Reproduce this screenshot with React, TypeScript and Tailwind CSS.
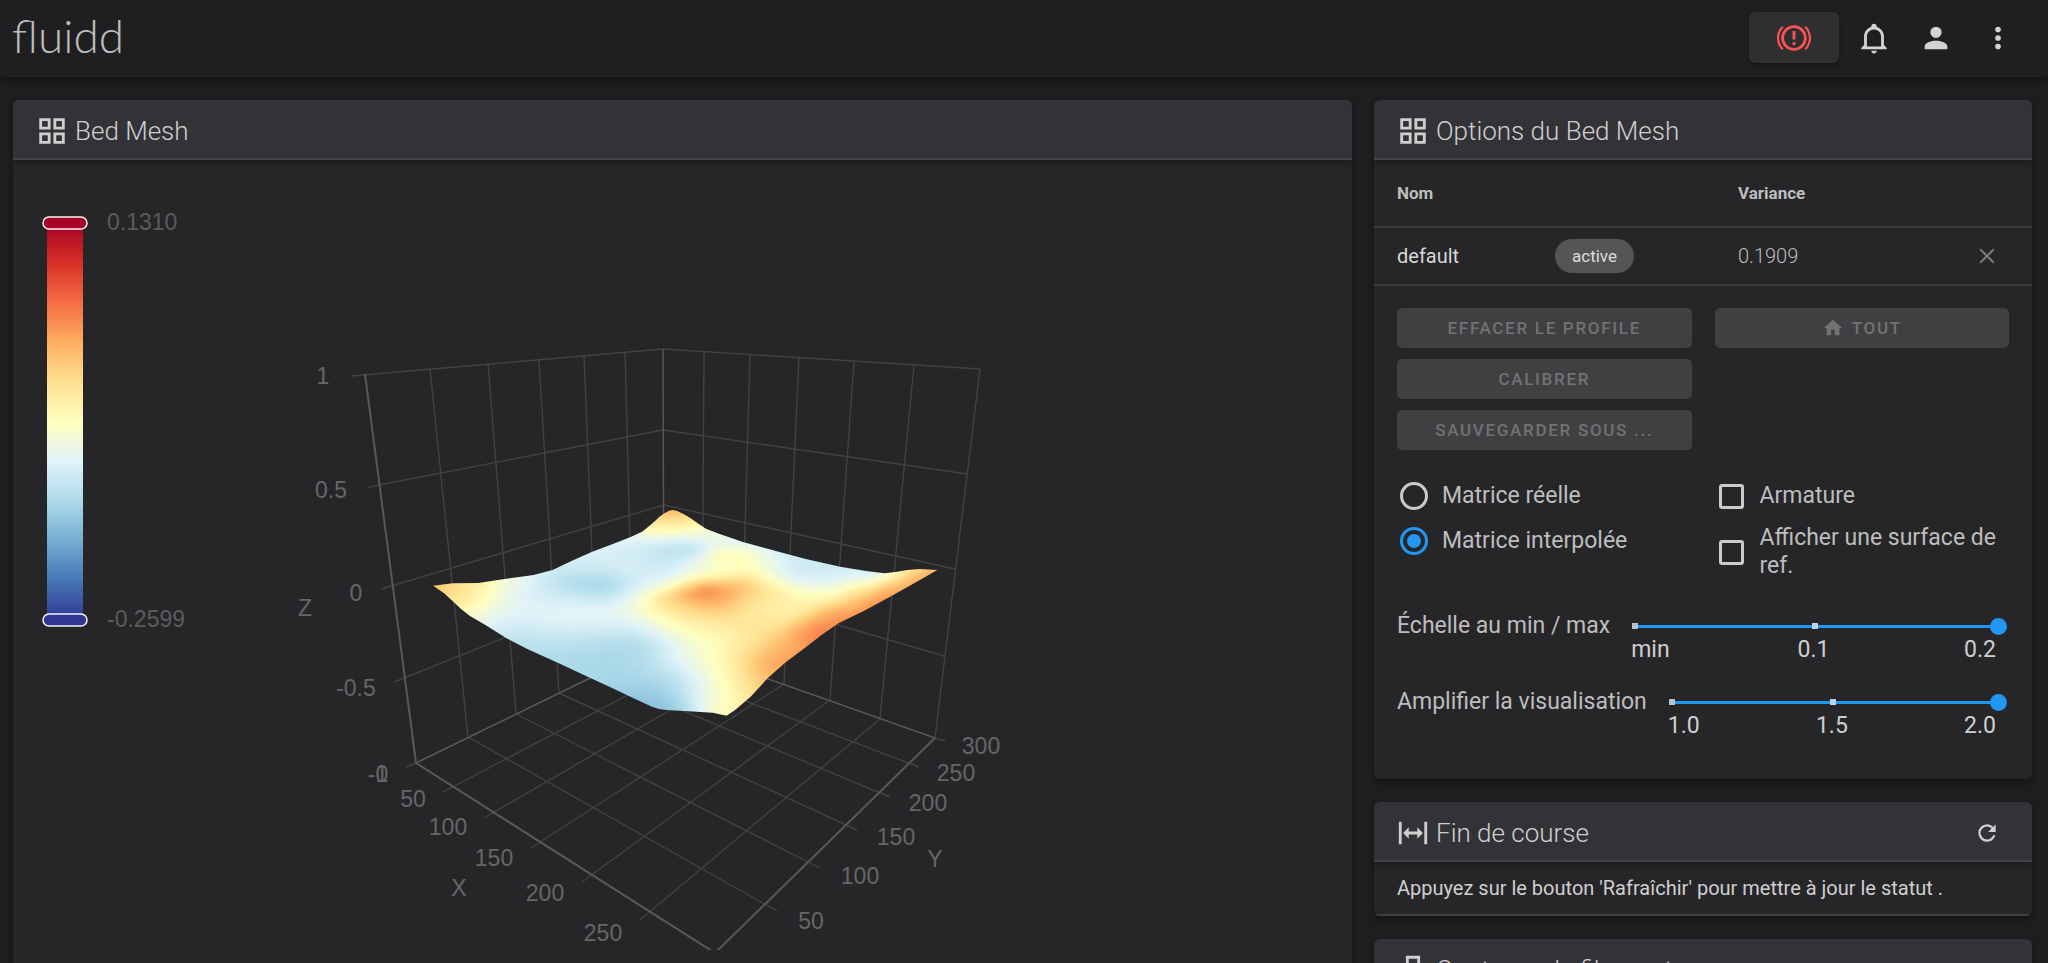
import { useState, type ReactNode } from 'react';

const PALETTE = [
  [49, 54, 149],
  [69, 117, 180],
  [116, 173, 209],
  [171, 217, 233],
  [224, 243, 248],
  [255, 255, 191],
  [254, 224, 144],
  [253, 174, 97],
  [244, 109, 67],
  [215, 48, 39],
  [165, 0, 38],
];

function paletteColor(value: number): string {
  const v = Math.min(0.9999, Math.max(0, value)) * (PALETTE.length - 1);
  const i = Math.floor(v);
  const f = v - i;
  const mix = PALETTE[i].map((c, k) => Math.round(c + (PALETTE[i + 1][k] - c) * f));
  return `rgb(${mix[0]},${mix[1]},${mix[2]})`;
}

/* Probe readings on the projected bed surface: x, y, normalised height. */
const SAMPLES: [number, number, number][] = [
  [38, 317, 0.67], [95, 313, 0.61], [100, 335, 0.6], [180, 310, 0.55], [130, 360, 0.56], [190, 350, 0.51],
  [150, 400, 0.48], [240, 300, 0.47], [230, 340, 0.46], [250, 390, 0.42], [175, 425, 0.43], [300, 292, 0.42],
  [310, 330, 0.4], [320, 400, 0.4], [220, 450, 0.38], [380, 275, 0.37], [400, 300, 0.34], [480, 310, 0.31],
  [520, 330, 0.31], [560, 310, 0.32], [500, 350, 0.35], [430, 340, 0.35], [620, 320, 0.38], [500, 225, 0.38],
  [500, 260, 0.37], [600, 270, 0.38], [420, 380, 0.4], [500, 400, 0.41], [350, 440, 0.38], [280, 450, 0.36],
  [270, 490, 0.33], [330, 490, 0.33], [330, 530, 0.32], [450, 540, 0.3], [560, 540, 0.3], [430, 480, 0.34],
  [560, 480, 0.33], [640, 490, 0.33], [700, 500, 0.37], [400, 550, 0.31], [500, 590, 0.3], [600, 570, 0.3],
  [600, 640, 0.27], [640, 665, 0.25], [680, 680, 0.25], [720, 690, 0.26], [700, 640, 0.28], [720, 600, 0.32],
  [760, 570, 0.38], [740, 540, 0.4], [700, 580, 0.33], [780, 690, 0.33], [780, 640, 0.36], [820, 620, 0.42],
  [820, 680, 0.42], [850, 640, 0.46], [860, 697, 0.48], [890, 707, 0.5], [900, 650, 0.51], [870, 600, 0.49],
  [820, 560, 0.46], [800, 520, 0.46], [740, 500, 0.41], [700, 450, 0.44], [640, 430, 0.42], [600, 400, 0.43],
  [650, 380, 0.49], [620, 350, 0.43], [700, 350, 0.57], [700, 400, 0.53], [760, 342, 0.67], [830, 328, 0.74],
  [840, 348, 0.73], [880, 350, 0.7], [920, 330, 0.67], [900, 285, 0.54], [770, 365, 0.65], [830, 375, 0.67],
  [924, 302, 0.62], [980, 330, 0.61], [950, 360, 0.61], [850, 400, 0.62], [780, 395, 0.6], [850, 430, 0.57],
  [760, 430, 0.53], [900, 440, 0.57], [950, 410, 0.58], [1020, 350, 0.57], [1060, 400, 0.55], [880, 470, 0.53],
  [1020, 305, 0.52], [1070, 340, 0.53], [1130, 350, 0.51], [1200, 340, 0.5], [900, 262, 0.49], [830, 280, 0.48],
  [750, 300, 0.46], [700, 320, 0.46], [900, 235, 0.51], [940, 215, 0.48], [850, 220, 0.47], [840, 250, 0.47],
  [960, 250, 0.49], [900, 200, 0.44], [1000, 240, 0.45], [1050, 290, 0.43], [1000, 270, 0.47], [1040, 240, 0.41],
  [730, 215, 0.34], [780, 208, 0.34], [680, 230, 0.36], [820, 208, 0.38], [640, 190, 0.39], [700, 180, 0.41],
  [740, 172, 0.43], [640, 165, 0.44], [740, 150, 0.52], [740, 125, 0.58], [735, 95, 0.67], [690, 135, 0.55],
  [800, 140, 0.51], [850, 155, 0.45], [680, 155, 0.5], [820, 175, 0.43], [780, 250, 0.41], [720, 270, 0.39],
  [900, 172, 0.42], [950, 190, 0.41], [1050, 220, 0.38], [1150, 245, 0.37], [1150, 290, 0.39], [1100, 280, 0.38],
  [1200, 280, 0.38], [1250, 275, 0.39], [1300, 290, 0.42], [1340, 282, 0.43], [1250, 310, 0.46], [1380, 277, 0.52],
  [1320, 310, 0.52], [1250, 330, 0.54], [1430, 270, 0.61], [1500, 270, 0.68], [1450, 295, 0.68], [1380, 340, 0.7],
  [1350, 320, 0.65], [1300, 360, 0.69], [1260, 370, 0.66], [1250, 410, 0.73], [1200, 395, 0.69], [1200, 440, 0.75],
  [1150, 440, 0.74], [1160, 410, 0.68], [1100, 460, 0.71], [1120, 500, 0.73], [1050, 470, 0.65], [1080, 430, 0.62],
  [1060, 540, 0.71], [1000, 520, 0.66], [1000, 560, 0.68], [1010, 600, 0.66], [950, 560, 0.61], [950, 620, 0.59],
  [920, 680, 0.53], [920, 520, 0.57], [960, 460, 0.58], [960, 500, 0.59], [880, 550, 0.52], [1130, 400, 0.61],
  [1150, 370, 0.55],
];

const OUTLINE =
  '38,317 95,310 170,309 240,298 330,285 385,270 440,243 500,215 560,192 610,172 645,155 662,141 680,125 697,109 710,100 723,92 735,90 747,93 765,102 785,114 800,125 830,146 870,162 940,187 1020,209 1120,237 1220,260 1300,274 1350,280 1385,275 1415,270 1450,267 1502,270 1440,307 1365,350 1290,392 1215,430 1165,466 1120,502 1060,548 1010,594 960,650 915,690 890,707 850,698 780,694 715,690 695,687 675,681 620,655 550,620 490,592 400,548 310,506 250,474 190,435 145,408 120,388 100,368 70,340';

const Y_WEIGHT = 1.6;

function kernel(dx: number, dy: number): number {
  const r2 = (dx * dx + dy * dy * Y_WEIGHT * Y_WEIGHT) / 10000;
  return r2 < 1e-9 ? 0 : r2 * Math.log(r2);
}

/* Thin plate spline through the readings, solved once by Gaussian elimination. */
function fitSurface(): (x: number, y: number) => number {
  const n = SAMPLES.length;
  const size = n + 3;
  const m: number[][] = [];
  for (let i = 0; i < n; i++) {
    const [xi, yi, v] = SAMPLES[i];
    const row = SAMPLES.map(([xj, yj], j) => kernel(xi - xj, yi - yj) + (i === j ? 0.12 : 0));
    m.push([...row, 1, xi / 1000, yi / 1000, v]);
  }
  m.push([...SAMPLES.map(() => 1), 0, 0, 0, 0]);
  m.push([...SAMPLES.map((s) => s[0] / 1000), 0, 0, 0, 0]);
  m.push([...SAMPLES.map((s) => s[1] / 1000), 0, 0, 0, 0]);
  for (let c = 0; c < size; c++) {
    let p = c;
    for (let r = c + 1; r < size; r++) if (Math.abs(m[r][c]) > Math.abs(m[p][c])) p = r;
    [m[c], m[p]] = [m[p], m[c]];
    for (let r = c + 1; r < size; r++) {
      const f = m[r][c] / m[c][c];
      if (f === 0) continue;
      for (let k = c; k <= size; k++) m[r][k] -= f * m[c][k];
    }
  }
  const w = new Array<number>(size).fill(0);
  for (let r = size - 1; r >= 0; r--) {
    let s = m[r][size];
    for (let k = r + 1; k < size; k++) s -= m[r][k] * w[k];
    w[r] = s / m[r][r];
  }
  return (x, y) => {
    let s = w[n] + (w[n + 1] * x) / 1000 + (w[n + 2] * y) / 1000;
    for (let i = 0; i < n; i++) s += w[i] * kernel(x - SAMPLES[i][0], y - SAMPLES[i][1]);
    return s;
  };
}

const CELL_W = 14;
const CELL_H = 9;

const CELLS = (() => {
  const height = fitSurface();
  const out: { x: number; y: number; fill: string }[] = [];
  for (let y = 81; y < 720; y += CELL_H) {
    for (let x = 20; x < 1520; x += CELL_W) {
      const near = SAMPLES.some(([sx, sy]) => Math.abs(sx - x) < 110 && Math.abs(sy - y) < 60);
      if (near) out.push({ x, y, fill: paletteColor(height(x + CELL_W / 2, y + CELL_H / 2)) });
    }
  }
  return out;
})();

type Line = [number, number, number, number];

const GRID_LINES: Line[] = [
  [352, 376, 663, 349], [663, 349, 980, 369], [980, 369, 935, 738],
  [367, 488, 379, 485], [379, 485, 663, 430], [663, 430, 967, 474],
  [381, 589, 664, 505], [664, 505, 955, 569],
  [394, 682, 664, 574], [664, 574, 944, 656],
  [430, 369, 468, 737], [488, 364, 516, 714], [539, 360, 559, 693], [584, 356, 597, 675], [625, 352, 633, 658],
  [704, 352, 702, 656], [750, 355, 741, 669], [799, 358, 784, 684], [854, 362, 830, 700], [914, 365, 880, 719],
  [443, 792, 702, 656], [484, 818, 741, 669], [531, 848, 784, 684], [582, 882, 830, 700], [640, 920, 880, 719],
  [468, 737, 777, 911], [516, 714, 820, 868], [559, 693, 857, 830], [597, 675, 890, 797], [633, 658, 919, 767],
  [406, 767, 416, 763], [935, 738, 945, 741],
];

const AXIS_LINES: Line[] = [[365, 374, 416, 763], [416, 763, 715, 953], [715, 953, 935, 738]];
const BACK_LINES: Line[] = [[663, 349, 664, 642], [416, 763, 664, 642], [664, 642, 935, 738]];

const AXIS_LABELS: [string, number, number][] = [
  ['1', 323, 376], ['0.5', 331, 490], ['0', 356, 593], ['Z', 305, 608], ['-0.5', 356, 688],
  ['-1', 378, 774], ['0', 382, 774],
  ['50', 413, 799], ['100', 448, 827], ['150', 494, 858], ['200', 545, 893], ['250', 603, 933], ['X', 459, 888],
  ['300', 981, 746], ['250', 956, 773], ['200', 928, 803], ['150', 896, 837], ['100', 860, 876], ['50', 811, 921],
  ['Y', 935, 859],
];

function Lines({ items, stroke, width }: { items: Line[]; stroke: string; width: number }) {
  return (
    <g stroke={stroke} strokeWidth={width}>
      {items.map(([x1, y1, x2, y2], i) => (
        <line key={i} x1={x1} y1={y1} x2={x2} y2={y2} />
      ))}
    </g>
  );
}

function MeshChart() {
  return (
    <svg
      viewBox="13 160 1339 790"
      className="block w-full overflow-hidden font-['Liberation_Sans',sans-serif]"
      role="img"
      aria-label="Bed Mesh"
    >
      <defs>
        <linearGradient id="scale" x1="0" y1="1" x2="0" y2="0">
          {PALETTE.map((_, i) => (
            <stop key={i} offset={i / 10} stopColor={paletteColor(i / 10)} />
          ))}
        </linearGradient>
        <clipPath id="surface">
          <polygon points={OUTLINE} />
        </clipPath>
        <filter id="soften" x="-5%" y="-5%" width="110%" height="110%">
          <feGaussianBlur stdDeviation="8 5" />
        </filter>
      </defs>

      <rect x="47" y="223" width="36" height="398" fill="url(#scale)" />
      <rect x="43" y="217" width="44" height="12" rx="6" fill="#a50026" stroke="#f4f4f4" strokeWidth="1.5" />
      <rect x="43" y="614" width="44" height="12" rx="6" fill="#313695" stroke="#f4f4f4" strokeWidth="1.5" />
      <g fill="#5b5b5d" fontSize="23">
        <text x="107" y="230">0.1310</text>
        <text x="107" y="627">-0.2599</text>
      </g>

      <Lines items={GRID_LINES} stroke="#424244" width={1.4} />
      <Lines items={BACK_LINES} stroke="#59595b" width={1.4} />
      <Lines items={AXIS_LINES} stroke="#59595b" width={2} />

      <g transform="translate(420 480) scale(.3444 .3333)">
        <g clipPath="url(#surface)">
          <g filter="url(#soften)" shapeRendering="crispEdges">
            {CELLS.map((c, i) => (
              <rect key={i} x={c.x} y={c.y} width={CELL_W + 3} height={CELL_H + 3} fill={c.fill} />
            ))}
          </g>
        </g>
      </g>

      <g fill="#666668" fontSize="23" textAnchor="middle">
        {AXIS_LABELS.map(([label, x, y], i) => (
          <text key={i} x={x} y={y + 8}>
            {label}
          </text>
        ))}
      </g>
    </svg>
  );
}

const ICONS = {
  brakeAlert:
    'M20.5 20.5C22.66 18.31 24 15.31 24 12C24 8.69 22.66 5.69 20.5 3.5L19.42 4.58C21.32 6.5 22.5 9.11 22.5 12C22.5 14.9 21.32 17.5 19.42 19.42L20.5 20.5M4.58 19.42C2.68 17.5 1.5 14.9 1.5 12C1.5 9.11 2.68 6.5 4.58 4.58L3.5 3.5C1.34 5.69 0 8.69 0 12C0 15.31 1.34 18.31 3.5 20.5L4.58 19.42M13 17V15H11V17H13M13 13V7H11V13H13M12 3C16.96 3 21 7.04 21 12S16.96 21 12 21 3 16.96 3 12 7.04 3 12 3M12 5C8.14 5 5 8.14 5 12S8.14 19 12 19 19 15.86 19 12 15.86 5 12 5Z',
  bell: 'M10 21H14C14 22.1 13.1 23 12 23S10 22.1 10 21M21 19V20H3V19L5 17V11C5 7.9 7 5.2 10 4.3V4C10 2.9 10.9 2 12 2S14 2.9 14 4V4.3C17 5.2 19 7.9 19 11V17L21 19M17 11C17 8.2 14.8 6 12 6S7 8.2 7 11V18H17V11Z',
  account:
    'M12,4A4,4 0 0,1 16,8A4,4 0 0,1 12,12A4,4 0 0,1 8,8A4,4 0 0,1 12,4M12,14C16.42,14 20,15.79 20,18V20H4V18C4,15.79 7.58,14 12,14Z',
  dots: 'M12,16A2,2 0 0,1 14,18A2,2 0 0,1 12,20A2,2 0 0,1 10,18A2,2 0 0,1 12,16M12,10A2,2 0 0,1 14,12A2,2 0 0,1 12,14A2,2 0 0,1 10,12A2,2 0 0,1 12,10M12,4A2,2 0 0,1 14,6A2,2 0 0,1 12,8A2,2 0 0,1 10,6A2,2 0 0,1 12,4Z',
  grid: 'M3 11H11V3H3M5 5H9V9H5M13 21H21V13H13M15 15H19V19H15M3 21H11V13H3M5 15H9V19H5M13 3V11H21V3M19 9H15V5H19Z',
  expand: 'M9,11H15V8L19,12L15,16V13H9V16L5,12L9,8V11M2,20V4H4V20H2M20,20V4H22V20H20Z',
  nozzle: 'M7 2V8H5V13H7.5L11 17H13L16.5 13H19V8H17V2H7M9 4H15V8H9V4M7 10H17V11H15.6L12.1 15H11.9L8.4 11H7V10M10.9 19V22H13.1V19Z',
  close: 'M19,6.41L17.59,5L12,10.59L6.41,5L5,6.41L10.59,12L5,17.59L6.41,19L12,13.41L17.59,19L19,17.59L13.41,12L19,6.41Z',
  home: 'M10,20V14H14V20H19V12H22L12,3L2,12H5V20H10Z',
  refresh:
    'M17.65,6.35C16.2,4.9 14.21,4 12,4A8,8 0 0,0 4,12A8,8 0 0,0 12,20C15.73,20 18.84,17.45 19.73,14H17.65C16.83,16.33 14.61,18 12,18A6,6 0 0,1 6,12A6,6 0 0,1 12,6C13.66,6 15.14,6.69 16.22,7.78L13,11H20V4L17.65,6.35Z',
};

function Icon({ name, className }: { name: keyof typeof ICONS; className: string }) {
  return (
    <svg viewBox="0 0 24 24" className={`shrink-0 fill-current ${className}`} aria-hidden="true">
      <path d={ICONS[name]} />
    </svg>
  );
}

function Card({
  icon,
  title,
  action,
  children,
}: {
  icon: keyof typeof ICONS;
  title: string;
  action?: ReactNode;
  children?: ReactNode;
}) {
  return (
    <section className="overflow-hidden rounded-md bg-[#262628] shadow-[0_3px_6px_rgba(0,0,0,0.35)]">
      <header className="relative flex h-[60px] items-center gap-[6px] border-b-2 border-[#454548] bg-[#333337] px-[22px] pt-[3px] shadow-[0_3px_6px_rgba(0,0,0,0.3)]">
        <Icon name={icon} className="size-[34px] text-[#cfcfd0]" />
        <h2 className="flex-1 text-[26px] leading-8 font-light text-[#cfcfd0]">{title}</h2>
        {action}
      </header>
      {children}
    </section>
  );
}

function ActionButton({ children }: { children: ReactNode }) {
  return (
    <button
      type="button"
      disabled
      className="flex h-10 w-full items-center justify-center gap-2 rounded-[5px] bg-[#404042] text-[17px] leading-6 font-medium tracking-widest text-[#727274] uppercase"
    >
      {children}
    </button>
  );
}

function RadioOption({ label, checked, onChange }: { label: string; checked: boolean; onChange: () => void }) {
  return (
    <label className="flex items-center gap-[14px]">
      <input
        type="radio"
        name="matrix"
        checked={checked}
        onChange={onChange}
        className="ml-[3px] size-7 shrink-0 appearance-none rounded-full border-[3px] border-[#cbcbcc] bg-clip-content p-1 checked:border-[#2196f3] checked:bg-[#2196f3]"
      />
      {label}
    </label>
  );
}

function CheckOption({ label }: { label: string }) {
  return (
    <label className="flex items-center gap-4">
      <input
        type="checkbox"
        className="ml-1 size-[25px] shrink-0 appearance-none rounded-[3px] border-[3px] border-[#cbcbcc] checked:border-[#2196f3] checked:bg-[#2196f3]"
      />
      {label}
    </label>
  );
}

function Slider({ id, label, marks }: { id: string; label: string; marks: string[] }) {
  const [value, setValue] = useState(2);
  return (
    <div className="flex items-start">
      <label htmlFor={id} className="shrink-0">
        {label}
      </label>
      <div className="mr-[2px] ml-4 flex-1">
        <div className="relative flex h-7 items-center">
          <div className="absolute inset-x-[9px] flex h-[3px] items-center justify-between bg-[#2196f3]">
            <span className="-ml-[3px] size-[6px] bg-[#b9c3cb]" />
            <span className="size-[6px] bg-[#b9d6ee]" />
            <span className="size-[6px]" />
          </div>
          <input
            id={id}
            type="range"
            min={0}
            max={2}
            value={value}
            onChange={(e) => setValue(Number(e.target.value))}
            className="relative h-7 w-full appearance-none bg-transparent [&::-webkit-slider-thumb]:size-[17px] [&::-webkit-slider-thumb]:appearance-none [&::-webkit-slider-thumb]:rounded-full [&::-webkit-slider-thumb]:bg-[#2196f3]"
          />
        </div>
        <div className="flex justify-between pr-[15px] pl-[5px] leading-5 text-[#cfcfd0]">
          {marks.map((mark) => (
            <span key={mark} className="w-7">
              {mark}
            </span>
          ))}
        </div>
      </div>
    </div>
  );
}

export default function App() {
  const [matrix, setMatrix] = useState('interpolated');
  return (
    <div className="h-screen overflow-hidden bg-[#1e1e20] font-[Roboto,sans-serif] text-[#bdbdbe]">
      <header className="relative flex h-[77px] items-center bg-[#1f1f21] pr-[19px] pb-[2px] pl-3 shadow-[0_3px_8px_rgba(0,0,0,0.4)]">
        <a href="/" className="pb-1 font-[Lato,sans-serif] text-[46px] leading-[56px] font-light text-[#bdbdbe]">
          fluidd
        </a>
        <nav className="ml-auto flex items-center text-[#d2d2d3]">
          <button
            type="button"
            aria-label="Arrêt d'urgence"
            className="mr-1 flex h-[51px] w-[90px] items-center justify-center rounded-md bg-[#2f2f31] text-[#ff5252] shadow-[0_3px_4px_rgba(0,0,0,0.3)]"
          >
            <Icon name="brakeAlert" className="size-[34px]" />
          </button>
          <button type="button" aria-label="Notifications" className="flex size-[62px] items-center justify-center">
            <Icon name="bell" className="size-[34px]" />
          </button>
          <button type="button" aria-label="Compte" className="flex size-[62px] items-center justify-center">
            <Icon name="account" className="size-[34px]" />
          </button>
          <button type="button" aria-label="Menu" className="flex size-[62px] items-center justify-center">
            <Icon name="dots" className="size-[34px]" />
          </button>
        </nav>
      </header>

      <main className="grid grid-cols-[1339fr_658fr] items-start gap-[22px] pt-[23px] pr-4 pl-[13px]">
        <Card icon="grid" title="Bed Mesh">
          <div className="pb-6">
            <MeshChart />
          </div>
        </Card>

        <div className="flex flex-col gap-[23px]">
          <Card icon="grid" title="Options du Bed Mesh">
            <table className="w-full table-fixed text-left">
              <thead>
                <tr className="h-[67px] border-b-2 border-[#3b3b3d] text-[17px] text-[#bdbdbe]">
                  <th className="w-[158px] pt-[2px] pl-[23px] font-bold">Nom</th>
                  <th className="w-[183px]" aria-label="État" />
                  <th className="pt-[2px] pl-[23px] font-bold">Variance</th>
                  <th className="w-[90px]" aria-label="Actions" />
                </tr>
              </thead>
              <tbody>
                <tr className="h-[58px] border-b-2 border-[#3b3b3d] text-[20px] leading-7">
                  <td className="pl-[23px] text-[#d6d6d7]">default</td>
                  <td className="pl-[23px]">
                    <span className="inline-flex h-[34px] items-center rounded-full bg-[#555556] px-[17px] text-[17px] text-[#dcdcdd]">
                      active
                    </span>
                  </td>
                  <td className="pl-[23px] font-light">0.1909</td>
                  <td>
                    <button type="button" aria-label="Supprimer" className="mx-auto flex size-8 items-center justify-center text-[#78787a]">
                      <Icon name="close" className="size-[26px]" />
                    </button>
                  </td>
                </tr>
              </tbody>
            </table>

            <div className="px-[23px] pt-[22px] pb-[43px] text-[23px] leading-7">
              <div className="grid grid-cols-2 items-start gap-x-[23px]">
                <div className="flex flex-col gap-[11px]">
                  <ActionButton>Effacer le profile</ActionButton>
                  <ActionButton>Calibrer</ActionButton>
                  <ActionButton>Sauvegarder sous ...</ActionButton>
                </div>
                <ActionButton>
                  <Icon name="home" className="size-[22px]" />
                  Tout
                </ActionButton>
                <fieldset className="mt-8 flex flex-col gap-[17px]">
                  <RadioOption
                    label="Matrice réelle"
                    checked={matrix === 'real'}
                    onChange={() => setMatrix('real')}
                  />
                  <RadioOption
                    label="Matrice interpolée"
                    checked={matrix === 'interpolated'}
                    onChange={() => setMatrix('interpolated')}
                  />
                </fieldset>
                <div className="mt-8 flex flex-col gap-[14px]">
                  <CheckOption label="Armature" />
                  <CheckOption label="Afficher une surface de ref." />
                </div>
              </div>
              <div className="mt-8 flex flex-col gap-7">
                <Slider id="scale-range" label="Échelle au min / max" marks={['min', '0.1', '0.2']} />
                <Slider id="box-range" label="Amplifier la visualisation" marks={['1.0', '1.5', '2.0']} />
              </div>
            </div>
          </Card>

          <Card
            icon="expand"
            title="Fin de course"
            action={
              <button type="button" aria-label="Rafraîchir" className="flex size-[46px] items-center justify-center text-[#d2d2d3]">
                <Icon name="refresh" className="size-[26px]" />
              </button>
            }
          >
            <p className="border-b-2 border-[#3f3f41] px-[23px] py-3 text-[20px] leading-7 text-[#cfcfd0]">
              Appuyez sur le bouton 'Rafraîchir' pour mettre à jour le statut .
            </p>
          </Card>

          <Card icon="nozzle" title="Capteurs de filament" />
        </div>
      </main>
    </div>
  );
}
